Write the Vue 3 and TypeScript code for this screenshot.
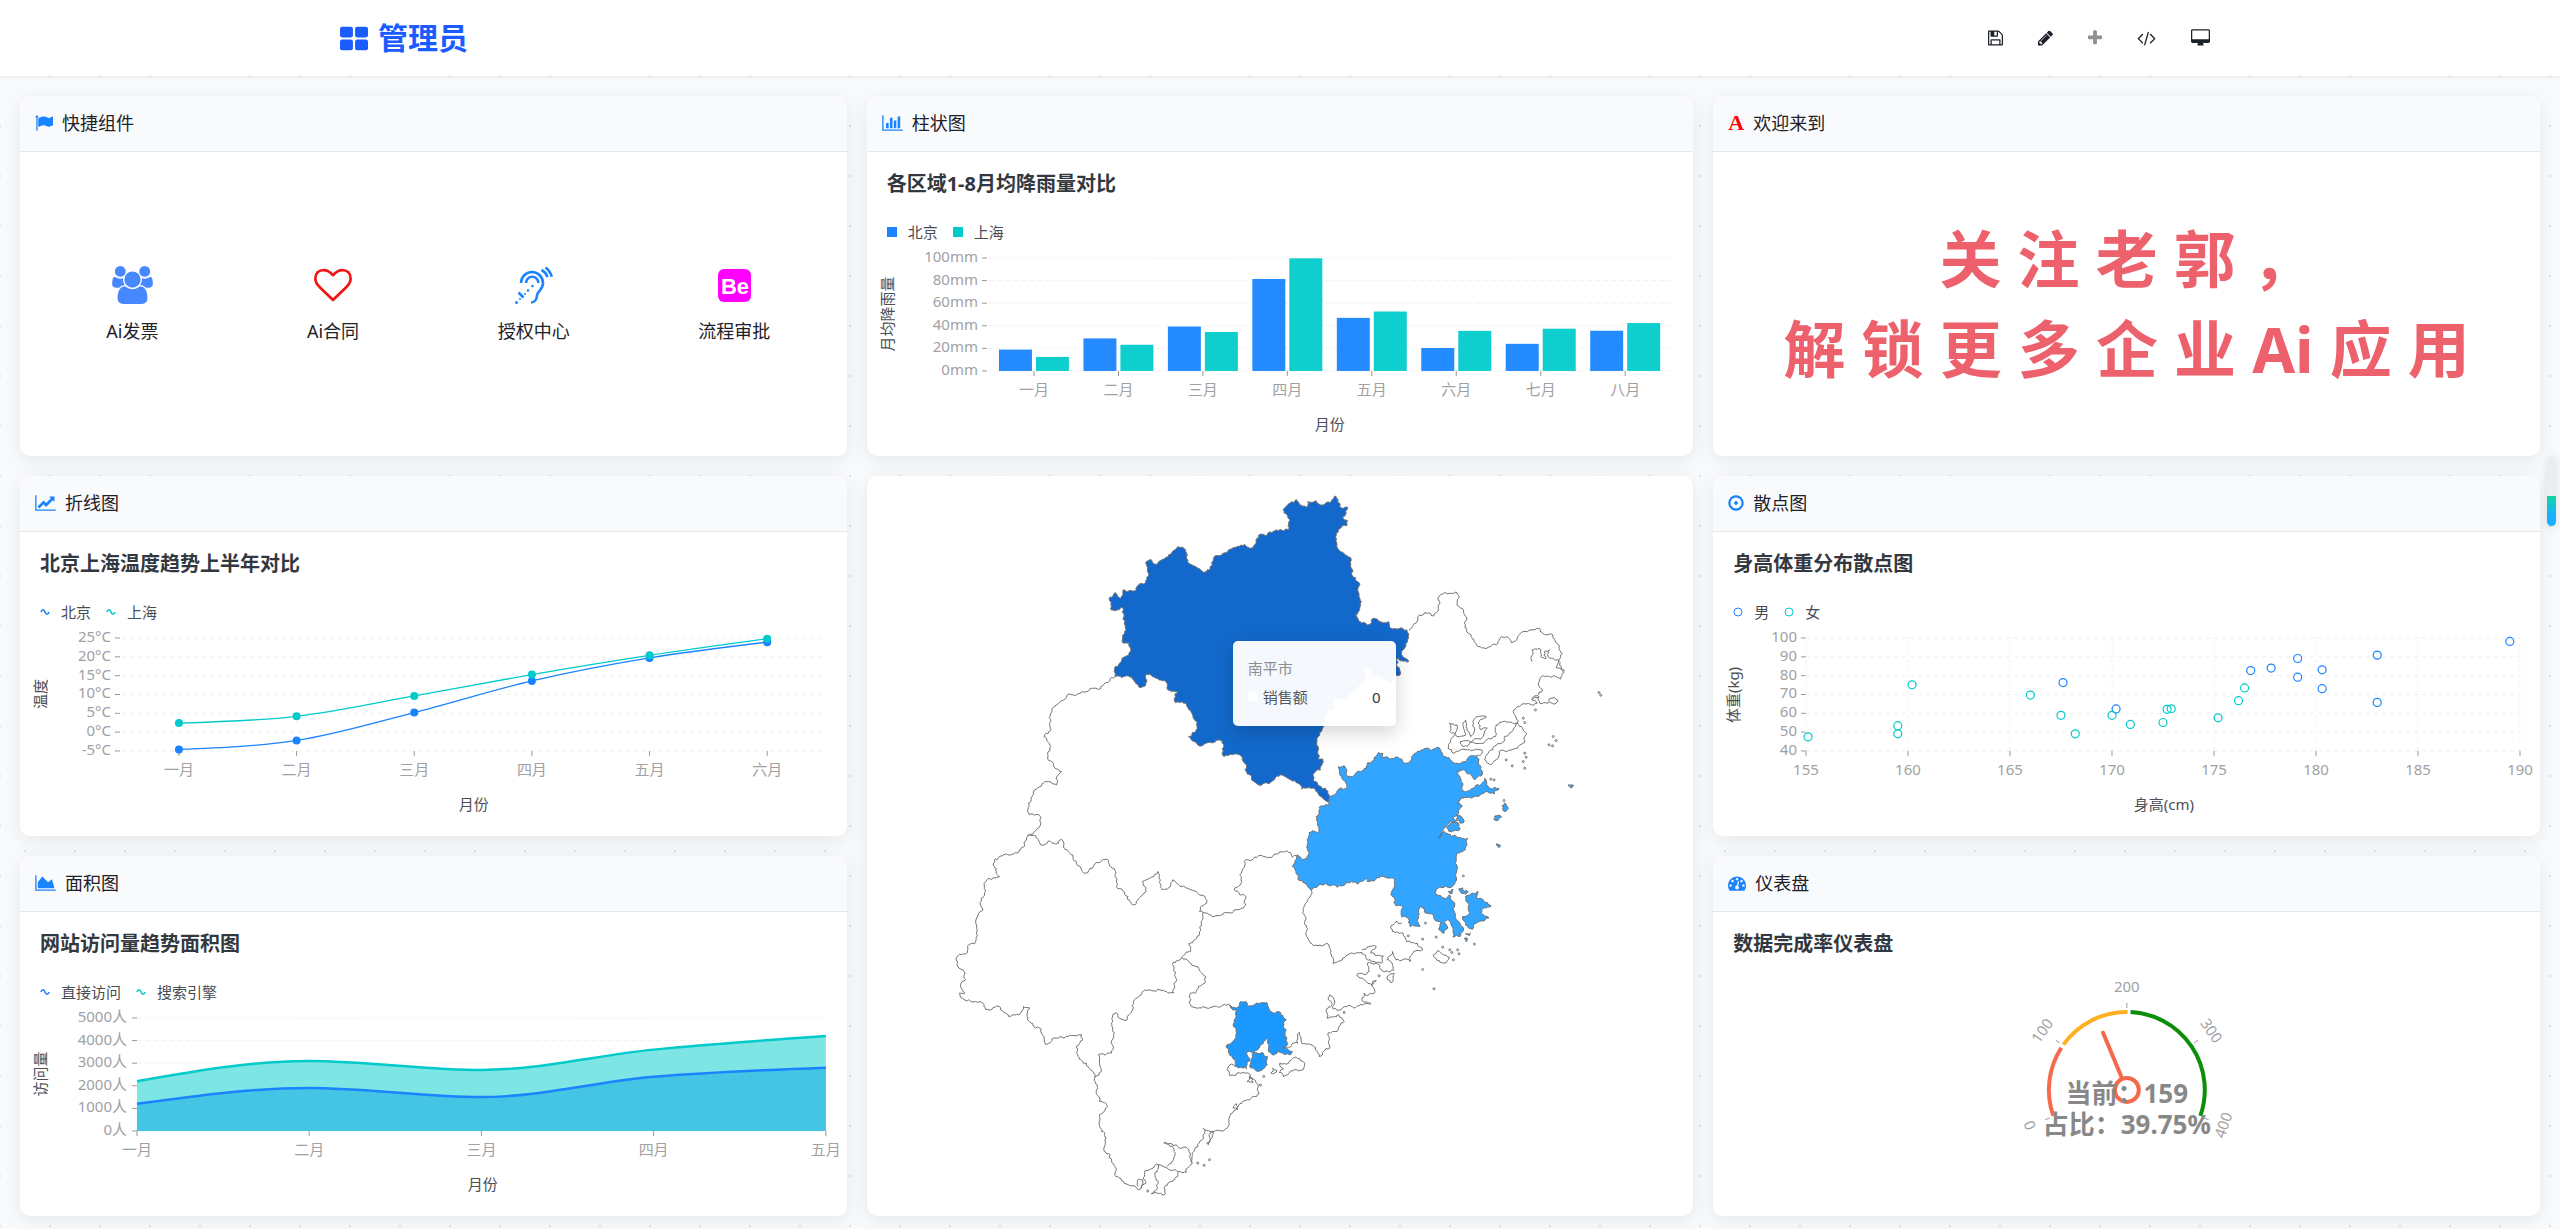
<script setup lang="ts">
type Point = [number, number]

interface IconShape {
  box: string
  width: number
  height: number
  path: string
}

/* ---------- icons ---------- */
const icons: Record<string, IconShape> = {
  save: {
    box: '128 0 1536 1792', width: 15, height: 18,
    path: 'M512 1536h768v-384h-768v384zm896 0h128v-896q0-14-10-38.5t-20-34.5l-281-281q-10-10-34-20t-39-10v416q0 40-28 68t-68 28h-576q-40 0-68-28t-28-68v-416h-128v1280h128v-416q0-40 28-68t68-28h832q40 0 68 28t28 68v416zm-384-928v-320q0-13-9.5-22.5t-22.5-9.5h-192q-13 0-22.5 9.5t-9.5 22.5v320q0 13 9.5 22.5t22.5 9.5h192q13 0 22.5-9.5t9.5-22.5zm640 32v928q0 40-28 68t-68 28h-1344q-40 0-68-28t-28-68v-1344q0-40 28-68t68-28h928q40 0 88 20t76 48l280 280q28 28 48 76t20 88z',
  },
  pencil: {
    box: '128 0 1536 1792', width: 15, height: 18,
    path: 'M491 1536l91-91-235-235-91 91v107h128v128h107zm523-928q0-22-22-22-10 0-17 7l-542 542q-7 7-7 17 0 22 22 22 10 0 17-7l542-542q7-7 7-17zm-54-192l416 416-832 832h-416v-416zm683 96q0 53-37 90l-166 166-416-416 166-165q36-38 90-38 53 0 91 38l235 234q37 39 37 91z',
  },
  plus: {
    box: '192 0 1408 1792', width: 14, height: 18,
    path: 'M1600 736v192q0 40-28 68t-68 28h-416v416q0 40-28 68t-68 28h-192q-40 0-68-28t-28-68v-416h-416q-40 0-68-28t-28-68v-192q0-40 28-68t68-28h416v-416q0-40 28-68t68-28h192q40 0 68 28t28 68v416h416q40 0 68 28t28 68z',
  },
  code: {
    box: '-64 0 1920 1792', width: 19, height: 18,
    path: 'M553 1399l-50 50q-10 10-23 10t-23-10l-466-466q-10-10-10-23t10-23l466-466q10-10 23-10t23 10l50 50q10 10 10 23t-10 23l-393 393 393 393q10 10 10 23t-10 23zm591-1067l-373 1291q-4 13-15.5 19.5t-23.5 2.5l-62-17q-13-4-19.5-15.5t-2.5-24.5l373-1291q4-13 15.5-19.5t23.5-2.5l62 17q13 4 19.5 15.5t2.5 24.5zm657 651l-466 466q-10 10-23 10t-23-10l-50-50q-10-10-10-23t10-23l393-393-393-393q-10-10-10-23t10-23l50-50q10-10 23-10t23 10l466 466q10 10 10 23t-10 23z',
  },
  desktop: {
    box: '-64 0 1920 1792', width: 19, height: 18,
    path: 'M1728 992v-832q0-13-9.5-22.5t-22.5-9.5h-1600q-13 0-22.5 9.5t-9.5 22.5v832q0 13 9.5 22.5t22.5 9.5h1600q13 0 22.5-9.5t9.5-22.5zm128-832v1088q0 66-47 113t-113 47h-544q0 37 16 77.5t32 71 16 43.5q0 26-19 45t-45 19h-512q-26 0-45-19t-19-45q0-14 16-44t32-70 16-78h-544q-66 0-113-47t-47-113v-1088q0-66 47-113t113-47h1600q66 0 113 47t47 113z',
  },
  flag: {
    box: '0 0 1792 1792', width: 18, height: 18,
    path: 'M320 256q0 72-64 110v1266q0 13-9.5 22.5t-22.5 9.5h-64q-13 0-22.5-9.5t-9.5-22.5v-1266q-64-38-64-110 0-53 37.5-90.5t90.5-37.5 90.5 37.5 37.5 90.5zm1472 64v763q0 25-12.5 38.5t-39.5 27.5q-215 116-369 116-61 0-123.5-22t-108.5-48-115.5-48-142.5-22q-192 0-464 146-17 9-33 9-26 0-45-19t-19-45v-742q0-32 31-55 21-14 79-43 236-120 421-120 107 0 200 29t219 88q38 19 88 19 54 0 117.5-21t110-47 88-47 54.5-21q26 0 45 19t19 45z',
  },
  bars: {
    box: '0 0 2048 1792', width: 21, height: 18,
    path: 'M640 896v512h-256v-512h256zm384-512v1024h-256v-1024h256zm1024 1152v128h-2048v-1536h128v1408h1920zm-640-896v768h-256v-768h256zm384-384v1152h-256v-1152h256z',
  },
  line: {
    box: '0 0 2048 1792', width: 21, height: 18,
    path: 'M2048 1536v128h-2048v-1536h128v1408h1920zm-128-1248v435q0 21-19.5 29.5t-35.5-7.5l-121-121-633 633q-10 10-23 10t-23-10l-233-233-416 416-192-192 585-585q10-10 23-10t23 10l233 233 464-464-121-121q-16-16-7.5-35.5t29.5-19.5h435q14 0 23 9t9 23z',
  },
  area: {
    box: '0 0 2048 1792', width: 21, height: 18,
    path: 'M2048 1536v128h-2048v-1536h128v1408h1920zm-384-1024l256 896h-1664v-576l448-576 576 576z',
  },
  target: {
    box: '128 0 1536 1792', width: 15, height: 18,
    path: 'M1088 896q0 80-56 136t-136 56-136-56-56-136 56-136 136-56 136 56 56 136zm-192-544q-148 0-273 73t-198 198-73 273 73 273 198 198 273 73 273-73 198-198 73-273-73-273-198-198-273-73zm768 544q0 209-103 385.5t-279.5 279.5-385.5 103-385.5-103-279.5-279.5-103-385.5 103-385.5 279.5-279.5 385.5-103 385.5 103 279.5 279.5 103 385.5z',
  },
  gauge: {
    box: '0 0 1792 1792', width: 18, height: 18,
    path: 'M384 1152q0-53-37.5-90.5t-90.5-37.5-90.5 37.5-37.5 90.5 37.5 90.5 90.5 37.5 90.5-37.5 37.5-90.5zm192-448q0-53-37.5-90.5t-90.5-37.5-90.5 37.5-37.5 90.5 37.5 90.5 90.5 37.5 90.5-37.5 37.5-90.5zm428 481l101-382q6-26-7.5-48.5t-38.5-29.5-48 6.5-30 39.5l-101 382q-60 5-107 43.5t-63 98.5q-20 77 20 146t117 89 146-20 89-117q16-60-6-117t-72-91zm660-33q0-53-37.5-90.5t-90.5-37.5-90.5 37.5-37.5 90.5 37.5 90.5 90.5 37.5 90.5-37.5 37.5-90.5zm-640-640q0-53-37.5-90.5t-90.5-37.5-90.5 37.5-37.5 90.5 37.5 90.5 90.5 37.5 90.5-37.5 37.5-90.5zm448 192q0-53-37.5-90.5t-90.5-37.5-90.5 37.5-37.5 90.5 37.5 90.5 90.5 37.5 90.5-37.5 37.5-90.5zm320 448q0 261-141 483-19 29-54 29h-1402q-35 0-54-29-141-221-141-483 0-182 71-348t191-286 286-191 348-71 348 71 286 191 191 286 71 348z',
  },
}

const tools = [
  { icon: 'save', label: '保存', muted: false },
  { icon: 'pencil', label: '编辑', muted: false },
  { icon: 'plus', label: '新增', muted: true },
  { icon: 'code', label: '代码', muted: false },
  { icon: 'desktop', label: '预览', muted: false },
]

/* ---------- chart helpers ---------- */
const PLOT_TOP = 14
const PLOT_BOTTOM = 127
const PLOT_HEIGHT = PLOT_BOTTOM - PLOT_TOP
const BLUE = '#1a83ff'
const TEAL = '#00caca'
const WAVE = 'M1 5c1-3 3-3 4 0s3 3 4 0'

const scaleY = (value: number, min: number, max: number) =>
  PLOT_BOTTOM - ((value - min) / (max - min)) * PLOT_HEIGHT

const fmt = (n: number) => n.toFixed(2)

// Smooth curve that never overshoots its points.
function monotone(points: Point[]): string {
  const n = points.length
  const slope = points.slice(1).map((p, i) => (p[1] - points[i][1]) / (p[0] - points[i][0]))
  const tangent = points.map((_, i) => {
    if (i === 0) return slope[0]
    if (i === n - 1) return slope[n - 2]
    const a = slope[i - 1]
    const b = slope[i]
    if (a * b <= 0) return 0
    return Math.sign(a) * Math.min(Math.abs(a), Math.abs(b), Math.abs(a + b) / 4) * 2
  })
  tangent[0] = (3 * slope[0] - tangent[1]) / 2
  tangent[n - 1] = (3 * slope[n - 2] - tangent[n - 2]) / 2
  let d = `M${fmt(points[0][0])} ${fmt(points[0][1])}`
  for (let i = 1; i < n; i++) {
    const [x0, y0] = points[i - 1]
    const [x1, y1] = points[i]
    const h = (x1 - x0) / 3
    d += `C${fmt(x0 + h)} ${fmt(y0 + h * tangent[i - 1])} ${fmt(x1 - h)} ${fmt(y1 - h * tangent[i])} ${fmt(x1)} ${fmt(y1)}`
  }
  return d
}

const months = ['一月', '二月', '三月', '四月', '五月', '六月', '七月', '八月']

/* ---------- rainfall ---------- */
const rainTicks = [0, 20, 40, 60, 80, 100].map(v => ({ text: `${v}mm`, y: scaleY(v, 0, 100) }))
const rainBeijing = [18.9, 28.8, 39.3, 81.4, 47, 20.3, 24, 35.6]
const rainShanghai = [12.4, 23.2, 34.5, 99.7, 52.6, 35.5, 37.4, 42.4]
const rain = rainBeijing.map((v, i) => {
  const x = 167 + i * 84.5
  return { month: months[i], x, a: scaleY(v, 0, 100), b: scaleY(rainShanghai[i], 0, 100) }
})

/* ---------- temperature ---------- */
const tempTicks = [-5, 0, 5, 10, 15, 20, 25].map(v => ({ text: `${v}°C`, y: scaleY(v, -5, 25) }))
const tempX = (i: number) => 159 + i * 117.7
const tempPoints = (values: number[]): Point[] => values.map((v, i) => [tempX(i), scaleY(v, -5, 25)])
const tempSeries = [
  { color: BLUE, points: tempPoints([-4.6, -2.2, 5.2, 13.6, 19.7, 23.9]) },
  { color: TEAL, points: tempPoints([2.4, 4.2, 9.6, 15.3, 20.4, 24.8]) },
]

/* ---------- visits ---------- */
const visitTicks = [0, 1000, 2000, 3000, 4000, 5000].map(v => ({ text: `${v}人`, y: scaleY(v, 0, 5000) }))
const visitX = (i: number) => 117 + i * 172.3
const visitLine = (values: number[]) => monotone(values.map((v, i): Point => [visitX(i), scaleY(v, 0, 5000)]))
const closeArea = (d: string) => `${d}L${fmt(visitX(4))} ${PLOT_BOTTOM}L${fmt(visitX(0))} ${PLOT_BOTTOM}Z`
const directLine = visitLine([1200, 1900, 1500, 2400, 2800])
const searchLine = visitLine([2200, 3100, 2700, 3600, 4200])

/* ---------- height / weight ---------- */
const bodyX = (v: number) => 93 + (v - 155) * 20.41
const weightTicks = [40, 50, 60, 70, 80, 90, 100].map(v => ({ text: `${v}`, y: scaleY(v, 40, 100) }))
const heightTicks = [155, 160, 165, 170, 175, 180, 185, 190].map(v => ({ text: `${v}`, x: bodyX(v) }))
const people: { color: string; data: Point[] }[] = [
  {
    color: BLUE,
    data: [[167.6, 76.3], [170.2, 62.3], [176.8, 82.7], [177.8, 84], [179.1, 89.1], [179.1, 79.2], [180.3, 83.1], [180.3, 73.1], [183, 90.9], [183, 65.8], [189.5, 98.2]],
  },
  {
    color: TEAL,
    data: [[155.1, 47.5], [159.5, 53.4], [159.5, 49.1], [160.2, 75.1], [166, 69.7], [167.5, 58.9], [168.2, 49.1], [170, 58.9], [170.9, 54.1], [172.5, 55.1], [172.7, 62.1], [172.9, 62.4], [175.2, 57.6], [176.2, 66.7], [176.5, 73.5]],
  },
]

/* ---------- gauge ---------- */
const GX = 414
const GY = 131
const polar = (value: number, r: number): Point => {
  const a = ((200 - (value / 400) * 220) * Math.PI) / 180
  return [GX + r * Math.cos(a), GY - r * Math.sin(a)]
}
const arc = (from: number, to: number) => {
  const [x0, y0] = polar(from, 78)
  const [x1, y1] = polar(to, 78)
  return `M${fmt(x0)} ${fmt(y0)}A78 78 0 0 1 ${fmt(x1)} ${fmt(y1)}`
}
const gaugeArcs = [
  { d: arc(1, 96), color: '#f66b50' },
  { d: arc(101, 201), color: '#ffb020' },
  { d: arc(205, 399), color: '#0b8f0b' },
]
const gaugeTicks = [0, 100, 200, 300, 400].map(v => {
  const turn = -110 + (v / 400) * 220
  return {
    text: `${v}`,
    from: polar(v, 82),
    to: polar(v, 87),
    at: polar(v, 103),
    turn: turn > 90 ? turn - 180 : turn,
  }
})
const needle = polar(159, 62)
const needleBase = polar(159, 13)

/* ---------- map ---------- */
// Outlines are digitised per sheet; each sheet has its own origin.
const sheet = (ox: number, oy: number, sx: number, sy: number) => (list: string): Point[] =>
  list.trim().split(/\s+/).map((pair): Point => {
    const [x, y] = pair.split(',').map(Number)
    return [ox + x / sx, oy + y / sy]
  })
const north = sheet(183, -6, 2.8, 3)
const south = sheet(63, 324, 2.8, 3)
const west = sheet(73, 164, 3, 3)

const noise = (x: number, y: number) => {
  const v = Math.sin(x * 12.9898 + y * 78.233) * 43758.5453
  return v - Math.floor(v) - 0.5
}
function roughen(a: Point, b: Point, out: Point[]) {
  const dx = b[0] - a[0]
  const dy = b[1] - a[1]
  const length = Math.hypot(dx, dy)
  if (length < 2.5) {
    out.push(b)
    return
  }
  const shift = noise(a[0] + b[0], a[1] + b[1]) * Math.min(0.55, 3.2 / length)
  const mid: Point = [(a[0] + b[0]) / 2 - dy * shift, (a[1] + b[1]) / 2 + dx * shift]
  roughen(a, mid, out)
  roughen(mid, b, out)
}
function border(points: Point[], closed = false): string {
  const out: Point[] = [points[0]]
  for (let i = 1; i < points.length; i++) roughen(points[i - 1], points[i], out)
  if (closed) roughen(points[points.length - 1], points[0], out)
  return 'M' + out.map(p => `${fmt(p[0])} ${fmt(p[1])}`).join('L') + (closed ? 'Z' : '')
}

const nanping = border(north(`690,88 700,105 718,112 722,95 745,92 765,105 785,98 798,78 806,95 812,112 834,112 830,130 820,140 834,152 830,168 818,168 802,190 806,235 825,252 840,262 848,318 866,348 866,375 873,395 868,415 855,435 872,460 890,465 905,445 928,456 948,455 955,475 1000,480 1006,492 996,520 985,545 988,560 1005,575 985,572 972,565 972,590 982,613 965,612 955,640 925,620 905,622 888,592 880,600 882,625 862,650 850,670 825,690 790,685 795,712 770,735 762,780 752,800 750,850 752,868 765,868 758,900 745,905 740,935 755,948 772,955 782,975 783,1003 760,980 735,955 705,958 695,940 675,930 655,918 630,928 605,938 587,946 565,930 550,905 545,880 535,858 488,860 482,812 450,818 415,826 388,800 410,780 412,758 395,725 375,700 352,698 358,665 335,662 325,635 305,630 270,612 268,640 257,652 235,630 220,618 183,620 180,605 200,575 225,545 222,520 203,518 210,490 205,430 200,412 185,422 172,420 166,388 182,368 198,385 205,360 240,362 245,348 268,338 276,318 268,280 285,270 292,282 325,262 358,230 380,240 388,280 438,306 455,285 460,260 500,240 535,225 570,234 585,195 605,198 640,182 667,180 672,150 653,120`), true)

const fuzhou = [
  border([
    ...north(`783,1003 785,980 805,962 830,955 828,935 812,915 808,890 825,888 832,900 835,920 850,918 870,905 888,895 888,880 908,872 920,848 932,850 930,862 950,868 975,862 992,880 1010,872 1020,852 1060,835 1085,832 1100,850 1110,862 1140,880 1165,875 1172,862 1195,858 1200,880 1212,912 1190,930 1165,903 1140,903 1150,925 1158,962 1185,955 1200,945 1218,925 1228,950 1258,955 1245,972 1220,965 1200,980 1150,990 1140,1000 1155,1010 1145,1030 1130,1040 1142,1052 1120,1056 1108,1072 1090,1105 1104,1085 1125,1100 1170,1105`),
    ...south(`1500,150 1475,165 1470,190 1475,235 1465,258 1440,262 1418,268 1420,285 1440,295 1455,285 1465,305 1470,340 1475,360 1490,380 1485,410 1465,412 1465,385 1455,362 1440,370 1450,385 1440,400 1425,385 1430,368 1415,362 1410,345 1390,340 1375,320 1368,350 1372,380 1345,380 1340,355 1322,352 1325,322 1305,318 1295,290 1298,235 1270,230 1225,245 1222,235 1200,252 1170,248 1140,262 1110,250 1068,272 1050,250 1030,238 1025,215 1015,200 1030,165 1045,180 1060,165 1062,98 1090,95 1082,50 1090,22 1110,14`),
  ], true),
  border(south(`1500,290 1515,282 1535,275 1530,295 1550,300 1572,318 1545,330 1550,345 1565,355 1530,370 1520,388 1500,375 1492,350 1512,338 1510,315`), true),
  border(north(`1112,1075 1125,1058 1145,1060 1148,1080 1125,1086`), true),
  border(north(`1140,1035 1160,1052 1150,1060 1138,1048`), true),
  border(north(`1268,1018 1273,1000 1283,1012 1275,1025`), true),
  border(north(`1243,1048 1255,1036 1265,1042 1255,1052`), true),
  border(north(`1250,1122 1262,1126 1258,1133`), true),
  border(north(`1452,944 1466,946 1460,954`), true),
  border(south(`1482,266 1492,264 1496,275 1508,276 1500,284 1486,276`), true),
  border(south(`1452,275 1465,268 1462,282`), true),
  border(south(`1500,402 1514,400 1510,408`), true),
  border(south(`1496,416 1504,414 1502,426`), true),
]

const xiamen = [
  border(south(`838,615 858,625 870,605 885,605 888,618 900,618 915,610 943,608 948,625 960,638 978,636 998,660 990,680 998,690 992,710 1000,715 998,740 985,748 1015,755 1010,765 990,762 975,752 965,765 948,755 943,715 925,735 912,752 885,760 895,775 888,790 888,808 858,800 855,780 838,765 832,735 845,730 858,712 850,680 856,655 858,630 842,624`), true),
  border(south(`905,760 930,758 945,770 945,795 920,815 898,805 900,780`), true),
]

const outlines = [
  border(north(`1006,480 1025,460 1035,435 1050,428 1075,438 1088,415 1090,380 1105,368 1140,368 1145,385 1140,405 1155,415 1165,440 1162,472 1180,495 1195,525 1215,534 1250,525 1265,500 1280,500 1292,518 1325,485 1370,475 1380,490 1405,492 1420,520 1435,550 1425,570 1440,600 1430,628 1375,622 1368,640 1380,660 1365,678 1350,690 1365,700 1325,702 1300,720 1310,758 1285,795 1265,820 1230,845 1218,870 1235,885 1250,870 1258,845 1310,835 1325,820 1335,790 1320,770 1310,758 1250,765 1248,800 1228,805 1215,820 1190,820 1160,830 1150,815 1185,812 1215,795 1225,775 1205,778 1200,760 1222,740 1200,740 1185,755 1190,780 1178,800 1168,775 1165,750 1158,770 1165,795 1140,800 1120,785 1118,760 1140,765 1135,790 1125,805 1115,835 1130,850 1170,840 1210,840 1210,850 1195,858`)),
  border(north(`1350,575 1350,540 1370,535 1375,560 1390,565 1385,545 1400,540 1395,560 1425,570 1418,592 1438,605`)),
  border(north(`1350,690 1370,680 1372,700 1395,700 1405,685 1422,690 1415,702 1400,698`)),
  border(west(`525,112 480,148 455,145 440,155 410,165 385,162 350,195 328,232 332,265 312,290 332,320 323,352 345,385 365,395 350,410 350,435 325,425 300,440 280,458 265,490 268,525 300,528 303,550 265,588`)),
  border(south(`275,105 265,138 240,158 205,165 180,180 180,200 195,230 165,235 152,258 150,290 145,320 135,345 130,400 125,432 105,440 100,462 78,468 76,495 90,510 100,540 85,555 98,580 82,580 90,595 140,605 165,630 195,620 220,650 250,645 262,620 280,625 272,650 290,680 312,688 325,735 350,715 425,705 428,720 410,740 415,770 438,790 462,832`)),
  border(south(`275,105 300,115 310,135 330,125 360,130 368,118 375,145 400,165 410,190 435,220 455,205 465,188 500,183 520,215 522,260 555,290 570,315 590,290 605,265 595,245 620,232 638,215 645,240 650,270 665,268 680,240 720,265 745,275 775,300 755,335 765,338 800,348 850,335 880,320 885,290 852,270 870,255 868,225 880,185 920,168 960,170 980,155 1000,152 1015,172 1030,165`)),
  border(south(`765,338 755,400 725,432 730,455 705,472 680,490 688,520 682,580 650,572 605,572 585,590 570,605 568,630 552,660 530,655 522,638 508,670 515,710 508,760 472,765 480,815 462,832 475,905 498,920 475,945 478,985 490,1000 488,1055 505,1065 520,1130 555,1155 590,1168 605,1150 600,1115 640,1095 665,1105 700,1115 718,1118 735,1090 725,1050 690,1035 655,1030 680,1040 685,1070 665,1100`)),
  border(south(`705,472 745,500 772,530 770,550 728,585 730,615 750,625 790,622 838,612`)),
  border(south(`735,1090 735,1060 762,1020 765,985 785,995 795,1000 780,1035 775,1030 790,995 832,985 838,950 860,925 890,900 922,882 920,855 895,822 860,820 840,828 832,810 840,795 858,800`)),
  border(south(`640,1095 630,1120 640,1145 635,1170 620,1182 660,1182 658,1160 680,1145 695,1118`)),
  border(south(`583,1160 585,1138 595,1140 592,1165`)),
  border(south(`888,845 895,830 905,848`), true),
  border(south(`850,925 858,912 862,930`), true),
  border(south(`1000,745 1030,730 1035,698 1040,725 1070,735 1085,755 1090,770 1120,745 1115,700 1140,695 1160,665 1145,645 1112,655 1110,628 1125,618 1120,585 1132,600 1130,628 1180,620 1235,612 1210,600 1215,580 1245,580 1240,545 1250,542 1240,555 1195,525 1230,515 1225,490 1250,490 1270,515 1300,510 1295,490 1280,480 1295,455 1305,480 1345,485 1355,455 1380,450 1365,430 1335,425 1325,400 1295,395 1290,385 1305,365 1322,370`)),
  border(south(`1068,272 1045,330 1055,395 1070,432 1115,432 1130,492 1165,468 1210,458 1225,480 1250,488 1265,490 1270,468 1235,460 1250,440 1210,450`)),
  border(south(`980,790 1005,790 1025,772 1045,785 1045,810 1020,810 990,830 978,818 990,808`), true),
  border(south(`955,820 960,805 972,812 965,820`), true),
  border(south(`1410,465 1422,452 1455,472 1440,490 1415,475`), true),
  border(south(`1282,540 1290,522 1300,520 1290,548`), true),
]

const islets: Point[] = [
  ...north(`1326,745 1360,720 1330,758 1398,825 1410,800 1418,812 1408,828 1330,850 1334,862 1326,875 1278,870 1295,888 1330,895 1235,928 1244,930 1538,668 1543,676 1272,992`),
  ...south(`1494,228 1388,370 1340,408 1380,418 1436,442 1456,450 1462,458 1478,450 1482,462 1466,480 1380,509 1412,567 1525,433 1418,412 1258,528 1160,638 935,830 926,856 750,1090 768,1097 783,1080 610,1174`),
]
</script>

<template>
  <div class="page">
    <header class="topbar">
      <div class="topbar-inner">
        <h1 class="brand">
          <svg viewBox="64 96 1664 1472" width="28" height="25" aria-hidden="true">
            <rect x="64" y="128" width="768" height="640" rx="128" />
            <rect x="960" y="128" width="768" height="640" rx="128" />
            <rect x="64" y="896" width="768" height="640" rx="128" />
            <rect x="960" y="896" width="768" height="640" rx="128" />
          </svg>
          管理员
        </h1>
        <nav class="tools">
          <button v-for="t in tools" :key="t.icon" type="button" :class="{ muted: t.muted }" :aria-label="t.label">
            <svg :viewBox="icons[t.icon].box" :width="icons[t.icon].width" :height="icons[t.icon].height" aria-hidden="true">
              <path :d="icons[t.icon].path" />
            </svg>
          </button>
        </nav>
      </div>
    </header>

    <main class="board">
      <section class="card">
        <h2 class="card-head">
          <svg :viewBox="icons.flag.box" width="18" height="18" aria-hidden="true"><path :d="icons.flag.path" /></svg>
          快捷组件
        </h2>
        <div class="shortcuts">
          <a href="#invoice">
            <svg class="users" viewBox="-64 0 1920 1792" width="41" height="38" aria-hidden="true">
              <path d="M529 896q-162 5-265 128h-134q-82 0-138-40.5t-56-118.5q0-353 124-353 6 0 43.5 21t97.5 42.5 119 21.5q67 0 133-23-5 37-5 66 0 139 81 256zm1071 637q0 120-73 189.5t-194 69.5h-874q-121 0-194-69.5t-73-189.5q0-53 3.5-103.5t14-109 26.5-108.5 43-97.5 62-81 85.5-53.5 111.5-20q10 0 43 21.5t73 48 107 48 135 21.5 135-21.5 107-48 73-48 43-21.5q61 0 111.5 20t85.5 53.5 62 81 43 97.5 26.5 108.5 14 109 3.5 103.5zm-1024-1277q0 106-75 181t-181 75-181-75-75-181 75-181 181-75 181 75 75 181zm704 384q0 159-112.5 271.5t-271.5 112.5-271.5-112.5-112.5-271.5 112.5-271.5 271.5-112.5 271.5 112.5 112.5 271.5zm576 225q0 78-56 118.5t-138 40.5h-134q-103-123-265-128 81-117 81-256 0-29-5-66 66 23 133 23 59 0 119-21.5t97.5-42.5 43.5-21q124 0 124 353zm-128-609q0 106-75 181t-181 75-181-75-75-181 75-181 181-75 181 75 75 181z" />
            </svg>
            Ai发票
          </a>
          <a href="#contract">
            <svg class="heart" viewBox="0 0 1792 1792" width="38" height="38" aria-hidden="true">
              <path d="M1664 596q0-81-21.5-143t-55-98.5-81.5-59.5-94-31-98-8-112 25.5-110.5 64-86.5 72-60 61.5q-18 22-49 22t-49-22q-24-28-60-61.5t-86.5-72-110.5-64-112-25.5-98 8-94 31-81.5 59.5-55 98.5-21.5 143q0 168 187 355l581 560 580-559q188-188 188-356zm128 0q0 221-229 450l-623 600q-18 18-44 18t-44-18l-624-602q-10-8-27.5-26t-55.5-65.5-68-97.5-53.5-121-23.5-138q0-220 127-344t351-124q62 0 126.5 21.5t120 58 95.5 68.5 76 68q36-36 76-68t95.5-68.5 120-58 126.5-21.5q224 0 351 124t127 344z" />
            </svg>
            Ai合同
          </a>
          <a href="#auth">
            <svg class="ear" viewBox="0 0 38 38" width="38" height="38" aria-hidden="true">
              <path d="M6 17a11 11 0 0 1 22 0c0 7-5.500 7.500-6 12.500c-.300 4-2.500 7-6 7" />
              <path d="M11 17a6.200 6.200 0 0 1 12.400 0" />
              <path d="M26.500 4c3 1.600 5 4 6 7.200M30.500 1.500c3.200 2.500 5.300 5.600 6.200 9.200" />
              <path d="M3.500 26.500l5 5" />
              <circle cx="1.500" cy="36.500" r="1.500" />
              <circle cx="5" cy="33" r="1" />
              <circle cx="10" cy="28" r="1" />
              <circle cx="13" cy="24.500" r="1.300" />
              <circle cx="17.500" cy="20" r="1.300" />
            </svg>
            授权中心
          </a>
          <a href="#approval">
            <svg class="behance" viewBox="0 0 33 38" width="33" height="38" aria-hidden="true">
              <rect y="3" width="33" height="33" rx="6" />
              <text x="17" y="28" text-anchor="middle">Be</text>
            </svg>
            流程审批
          </a>
        </div>
      </section>

      <section class="card">
        <h2 class="card-head">
          <svg :viewBox="icons.bars.box" width="21" height="18" aria-hidden="true"><path :d="icons.bars.path" /></svg>
          柱状图
        </h2>
        <h3 class="chart-title">各区域1-8月均降雨量对比</h3>
        <ul class="legend">
          <li><i class="key square blue"></i>北京</li>
          <li><i class="key square teal"></i>上海</li>
        </ul>
        <svg class="chart" viewBox="0 0 827 212" role="img" aria-label="各区域月均降雨量">
          <g v-for="t in rainTicks" :key="t.text">
            <line class="grid" x1="122" x2="805" :y1="t.y" :y2="t.y" />
            <line class="tick" x1="115" x2="120" :y1="t.y" :y2="t.y" />
            <text class="label" x="111" :y="t.y + 4" text-anchor="end">{{ t.text }}</text>
          </g>
          <g v-for="r in rain" :key="r.month">
            <rect :x="r.x - 35" :y="r.a" width="33" :height="127 - r.a" fill="#248aff" />
            <rect :x="r.x + 2" :y="r.b" width="33" :height="127 - r.b" fill="#0fcece" />
            <line class="tick" :x1="r.x" :x2="r.x" y1="127" y2="132" />
            <text class="label" :x="r.x" y="151" text-anchor="middle">{{ r.month }}</text>
          </g>
          <text class="axis-name" x="463" y="186" text-anchor="middle">月份</text>
          <text class="axis-name" transform="translate(26 70) rotate(-90)" text-anchor="middle">月均降雨量</text>
        </svg>
      </section>

      <section class="card">
        <h2 class="card-head">
          <span class="letter" aria-hidden="true">A</span>
          欢迎来到
        </h2>
        <p class="slogan">关 注 老 郭 ，<br>解 锁 更 多 企 业 Ai 应 用</p>
      </section>

      <section class="card">
        <h2 class="card-head">
          <svg :viewBox="icons.line.box" width="21" height="18" aria-hidden="true"><path :d="icons.line.path" /></svg>
          折线图
        </h2>
        <h3 class="chart-title">北京上海温度趋势上半年对比</h3>
        <ul class="legend">
          <li><svg class="key wave" viewBox="0 0 10 10"><path :d="WAVE" :stroke="BLUE" /></svg>北京</li>
          <li><svg class="key wave" viewBox="0 0 10 10"><path :d="WAVE" :stroke="TEAL" /></svg>上海</li>
        </ul>
        <svg class="chart" viewBox="0 0 827 212" role="img" aria-label="温度趋势">
          <g v-for="t in tempTicks" :key="t.text">
            <line class="grid" x1="102" x2="804" :y1="t.y" :y2="t.y" />
            <line class="tick" x1="95" x2="100" :y1="t.y" :y2="t.y" />
            <text class="label" x="91" :y="t.y + 4" text-anchor="end">{{ t.text }}</text>
          </g>
          <g v-for="i in 6" :key="i">
            <line class="tick" :x1="tempX(i - 1)" :x2="tempX(i - 1)" y1="127" y2="132" />
            <text class="label" :x="tempX(i - 1)" y="151" text-anchor="middle">{{ months[i - 1] }}</text>
          </g>
          <g v-for="s in tempSeries" :key="s.color">
            <path :d="monotone(s.points)" fill="none" :stroke="s.color" stroke-width="1.300" />
            <circle v-for="(p, i) in s.points" :key="i" :cx="p[0]" :cy="p[1]" r="4" :fill="s.color" />
          </g>
          <text class="axis-name" x="454" y="186" text-anchor="middle">月份</text>
          <text class="axis-name" transform="translate(26 70) rotate(-90)" text-anchor="middle">温度</text>
        </svg>
      </section>

      <section class="card map-card">
        <svg class="map" viewBox="0 0 827 740" role="img" aria-label="福建省地图">
          <path v-for="(d, i) in outlines" :key="i" class="region" :d="d" fill="none" />
          <path class="region" :d="nanping" fill="#1269cb" />
          <path v-for="(d, i) in fuzhou" :key="i" class="region" :d="d" fill="#31a5ff" />
          <path v-for="(d, i) in xiamen" :key="i" class="region" :d="d" fill="#1c99ff" />
          <circle v-for="(p, i) in islets" :key="i" class="region" :cx="p[0]" :cy="p[1]" r="1" fill="#fff" />
        </svg>
        <div class="tooltip" role="tooltip">
          <p class="tooltip-title">南平市</p>
          <p class="tooltip-row"><i></i><span>销售额</span><b>0</b></p>
        </div>
      </section>

      <section class="card">
        <h2 class="card-head">
          <svg :viewBox="icons.target.box" width="16" height="18" aria-hidden="true"><path :d="icons.target.path" /></svg>
          散点图
        </h2>
        <h3 class="chart-title">身高体重分布散点图</h3>
        <ul class="legend">
          <li><svg class="key" viewBox="0 0 10 10"><circle cx="5" cy="5" r="4" fill="none" :stroke="BLUE" /></svg>男</li>
          <li><svg class="key" viewBox="0 0 10 10"><circle cx="5" cy="5" r="4" fill="none" :stroke="TEAL" /></svg>女</li>
        </ul>
        <svg class="chart" viewBox="0 0 827 212" role="img" aria-label="身高体重分布">
          <g v-for="t in weightTicks" :key="t.text">
            <line class="grid" x1="93" x2="807" :y1="t.y" :y2="t.y" />
            <line class="tick" x1="88" x2="93" :y1="t.y" :y2="t.y" />
            <text class="label" x="84" :y="t.y + 4" text-anchor="end">{{ t.text }}</text>
          </g>
          <g v-for="t in heightTicks" :key="t.text">
            <line class="grid" :x1="t.x" :x2="t.x" y1="127" y2="14" />
            <line class="tick" :x1="t.x" :x2="t.x" y1="127" y2="132" />
            <text class="label" :x="t.x" y="151" text-anchor="middle">{{ t.text }}</text>
          </g>
          <g v-for="s in people" :key="s.color" fill="none" :stroke="s.color" stroke-width="1.200">
            <circle v-for="(p, i) in s.data" :key="i" :cx="bodyX(p[0])" :cy="scaleY(p[1], 40, 100)" r="4" />
          </g>
          <text class="axis-name" x="451" y="186" text-anchor="middle">身高(cm)</text>
          <text class="axis-name" transform="translate(26 71) rotate(-90)" text-anchor="middle">体重(kg)</text>
        </svg>
      </section>

      <section class="card">
        <h2 class="card-head">
          <svg :viewBox="icons.area.box" width="21" height="18" aria-hidden="true"><path :d="icons.area.path" /></svg>
          面积图
        </h2>
        <h3 class="chart-title">网站访问量趋势面积图</h3>
        <ul class="legend">
          <li><svg class="key wave" viewBox="0 0 10 10"><path :d="WAVE" :stroke="BLUE" /></svg>直接访问</li>
          <li><svg class="key wave" viewBox="0 0 10 10"><path :d="WAVE" :stroke="TEAL" /></svg>搜索引擎</li>
        </ul>
        <svg class="chart" viewBox="0 0 827 212" role="img" aria-label="网站访问量趋势">
          <g v-for="t in visitTicks" :key="t.text">
            <line class="grid" x1="117" x2="806" :y1="t.y" :y2="t.y" />
            <line class="tick" x1="112" x2="117" :y1="t.y" :y2="t.y" />
            <text class="label" x="107" :y="t.y + 4" text-anchor="end">{{ t.text }}</text>
          </g>
          <path :d="closeArea(searchLine)" fill="#7de5e3" />
          <path :d="closeArea(directLine)" fill="#45c5e4" />
          <path :d="directLine" fill="none" :stroke="BLUE" stroke-width="2.500" />
          <path :d="searchLine" fill="none" :stroke="TEAL" stroke-width="2.500" />
          <g v-for="i in 5" :key="i">
            <line class="tick" :x1="visitX(i - 1)" :x2="visitX(i - 1)" y1="127" y2="132" />
            <text class="label" :x="visitX(i - 1)" y="151" text-anchor="middle">{{ months[i - 1] }}</text>
          </g>
          <text class="axis-name" x="463" y="186" text-anchor="middle">月份</text>
          <text class="axis-name" transform="translate(26 70) rotate(-90)" text-anchor="middle">访问量</text>
        </svg>
      </section>

      <section class="card">
        <h2 class="card-head">
          <svg :viewBox="icons.gauge.box" width="18" height="18" aria-hidden="true"><path :d="icons.gauge.path" /></svg>
          仪表盘
        </h2>
        <h3 class="chart-title">数据完成率仪表盘</h3>
        <svg class="chart" viewBox="0 0 827 257" role="img" aria-label="数据完成率">
          <path v-for="a in gaugeArcs" :key="a.color" :d="a.d" fill="none" :stroke="a.color" stroke-width="4" />
          <g v-for="t in gaugeTicks" :key="t.text">
            <line class="tick" :x1="t.from[0]" :y1="t.from[1]" :x2="t.to[0]" :y2="t.to[1]" />
            <text class="label" :transform="`translate(${t.at[0]} ${t.at[1]}) rotate(${t.turn})`" y="5" text-anchor="middle">{{ t.text }}</text>
          </g>
          <g fill="none" stroke="#f5694a" stroke-width="4">
            <line :x1="needleBase[0]" :y1="needleBase[1]" :x2="needle[0]" :y2="needle[1]" stroke-linecap="round" />
            <circle :cx="GX" :cy="GY" r="12" />
          </g>
          <text class="reading" :x="GX" y="144" text-anchor="middle">当前：159</text>
          <text class="reading" :x="GX" y="175" text-anchor="middle">占比：39.75%</text>
        </svg>
      </section>
    </main>

    <div class="side-handle" aria-hidden="true"></div>
  </div>
</template>

<style>
html,
body {
  margin: 0;
  background: #f8fafc;
}
</style>

<style scoped>
.page {
  position: relative;
  overflow: hidden;
  color: #1d2129;
  font-family: "Noto Sans", "Noto Sans CJK SC", sans-serif;
}

.topbar {
  position: relative;
  background: #fff;
  box-shadow: 0 1px 4px rgba(0, 0, 0, 0.08);
}

.topbar-inner {
  display: flex;
  align-items: center;
  justify-content: space-between;
  width: calc(100% - 40px);
  max-width: 1880px;
  height: 76px;
  margin: 0 auto;
}

.brand {
  display: flex;
  align-items: center;
  gap: 10px;
  margin: 0;
  color: #1a5cff;
  font-size: 30px;
  font-weight: 700;
  line-height: 40px;
}

.brand svg {
  fill: currentColor;
}

.tools {
  display: flex;
  align-items: center;
  gap: 19px;
  padding-right: 2px;
}

.tools button {
  display: flex;
  padding: 8px;
  border: 0;
  background: none;
  color: #1d2129;
  cursor: pointer;
}

.tools button.muted {
  color: #8e9094;
}

.tools svg {
  fill: currentColor;
}

.board {
  display: grid;
  grid-template-columns: repeat(3, minmax(0, 1fr));
  grid-auto-rows: minmax(360px, auto);
  gap: 20px;
  padding: 20px 20px 13px;
  background-color: #f8fafc;
  background-image:
    radial-gradient(circle, #dfe1e5 1px, transparent 1px),
    radial-gradient(circle, #dfe1e5 1px, transparent 1px);
  background-position: -25px -25px, 0 0;
  background-size: 50px 50px;
}

.card {
  display: flex;
  flex-direction: column;
  overflow: hidden;
  border-radius: 10px;
  background: #fff;
  box-shadow: 0 4px 20px rgba(0, 0, 0, 0.08);
}

.card-head {
  display: flex;
  align-items: center;
  gap: 9px;
  height: 53px;
  margin: 0;
  padding: 0 15px 2px;
  border-bottom: 1px solid #e5e7eb;
  background: #f9fafc;
  font-size: 18px;
  font-weight: 400;
  line-height: 26px;
}

.card-head svg {
  flex: none;
  fill: #1a83ff;
}

.letter {
  color: #f00;
  font-family: "Liberation Serif", serif;
  font-size: 22px;
  font-weight: 700;
}

.shortcuts {
  display: grid;
  grid-template-columns: repeat(4, 1fr);
  flex: 1;
  align-items: center;
  padding: 2px 12px 0;
}

.shortcuts a {
  display: flex;
  flex-direction: column;
  align-items: center;
  gap: 14px;
  color: inherit;
  font-size: 18px;
  line-height: 26px;
  text-decoration: none;
}

.users {
  fill: #4788ff;
}

.heart {
  fill: #f01414;
}

.ear path {
  fill: none;
  stroke: #1a83ff;
  stroke-width: 2.6px;
}

.ear circle {
  fill: #1a83ff;
}

.behance rect {
  fill: #f0f;
}

.behance text {
  fill: #fff;
  font: 700 22px "Liberation Sans", sans-serif;
}

.slogan {
  margin: auto;
  color: #ed616c;
  font-size: 62px;
  font-weight: 700;
  line-height: 90px;
  text-align: center;
  white-space: nowrap;
}

.chart-title {
  margin: 17px 20px 0;
  color: #333840;
  font-size: 20px;
  font-weight: 700;
  line-height: 30px;
}

.legend {
  display: flex;
  gap: 15px;
  margin: 21px 20px 0;
  padding: 0;
  color: #484c54;
  font-size: 15px;
  line-height: 24px;
  list-style: none;
}

.legend li {
  display: flex;
  align-items: center;
  gap: 11px;
}

.key {
  width: 10px;
  height: 10px;
}

.key.blue {
  background: #1a83ff;
}

.key.teal {
  background: #00caca;
}

.wave path {
  fill: none;
  stroke-width: 1.6px;
}

.chart {
  display: block;
  width: 100%;
}

.grid {
  stroke: #f0f0f1;
  stroke-dasharray: 4 4;
}

.tick {
  stroke: #999;
}

.label {
  fill: #9fa1a4;
  font-size: 15px;
}

.axis-name {
  fill: #4c4f55;
  font-size: 15px;
}

.reading {
  fill: #888;
  font-size: 26px;
  font-weight: 700;
}

.map-card {
  position: relative;
  grid-row: span 2;
}

.map {
  display: block;
  width: 100%;
}

.region {
  stroke: #707070;
  stroke-width: 1px;
}

.tooltip {
  position: absolute;
  top: 165px;
  left: 366px;
  box-sizing: border-box;
  width: 163px;
  padding: 14px 15px 16px;
  border-radius: 5px;
  background: rgba(255, 255, 255, 0.96);
  box-shadow: 0 6px 20px rgba(0, 0, 0, 0.18);
  font-size: 15px;
  line-height: 26px;
}

.tooltip p {
  margin: 0;
}

.tooltip .tooltip-title {
  margin-bottom: 3px;
  color: #8c8e92;
}

.tooltip-row {
  display: flex;
  align-items: center;
  gap: 5px;
  color: #55585e;
}

.tooltip-row i {
  width: 10px;
  height: 10px;
  border-radius: 50%;
  background: #fff;
}

.tooltip-row b {
  margin-left: auto;
  color: #333840;
  font-weight: 400;
}

.side-handle {
  position: absolute;
  top: 456px;
  right: 4px;
  width: 9px;
  height: 70px;
  border-radius: 5px;
  background: linear-gradient(#ecedee 40px, #0fd6a4 40px, #19b0ff 60px);
  box-shadow: 0 2px 8px rgba(0, 0, 0, 0.12);
}
</style>
